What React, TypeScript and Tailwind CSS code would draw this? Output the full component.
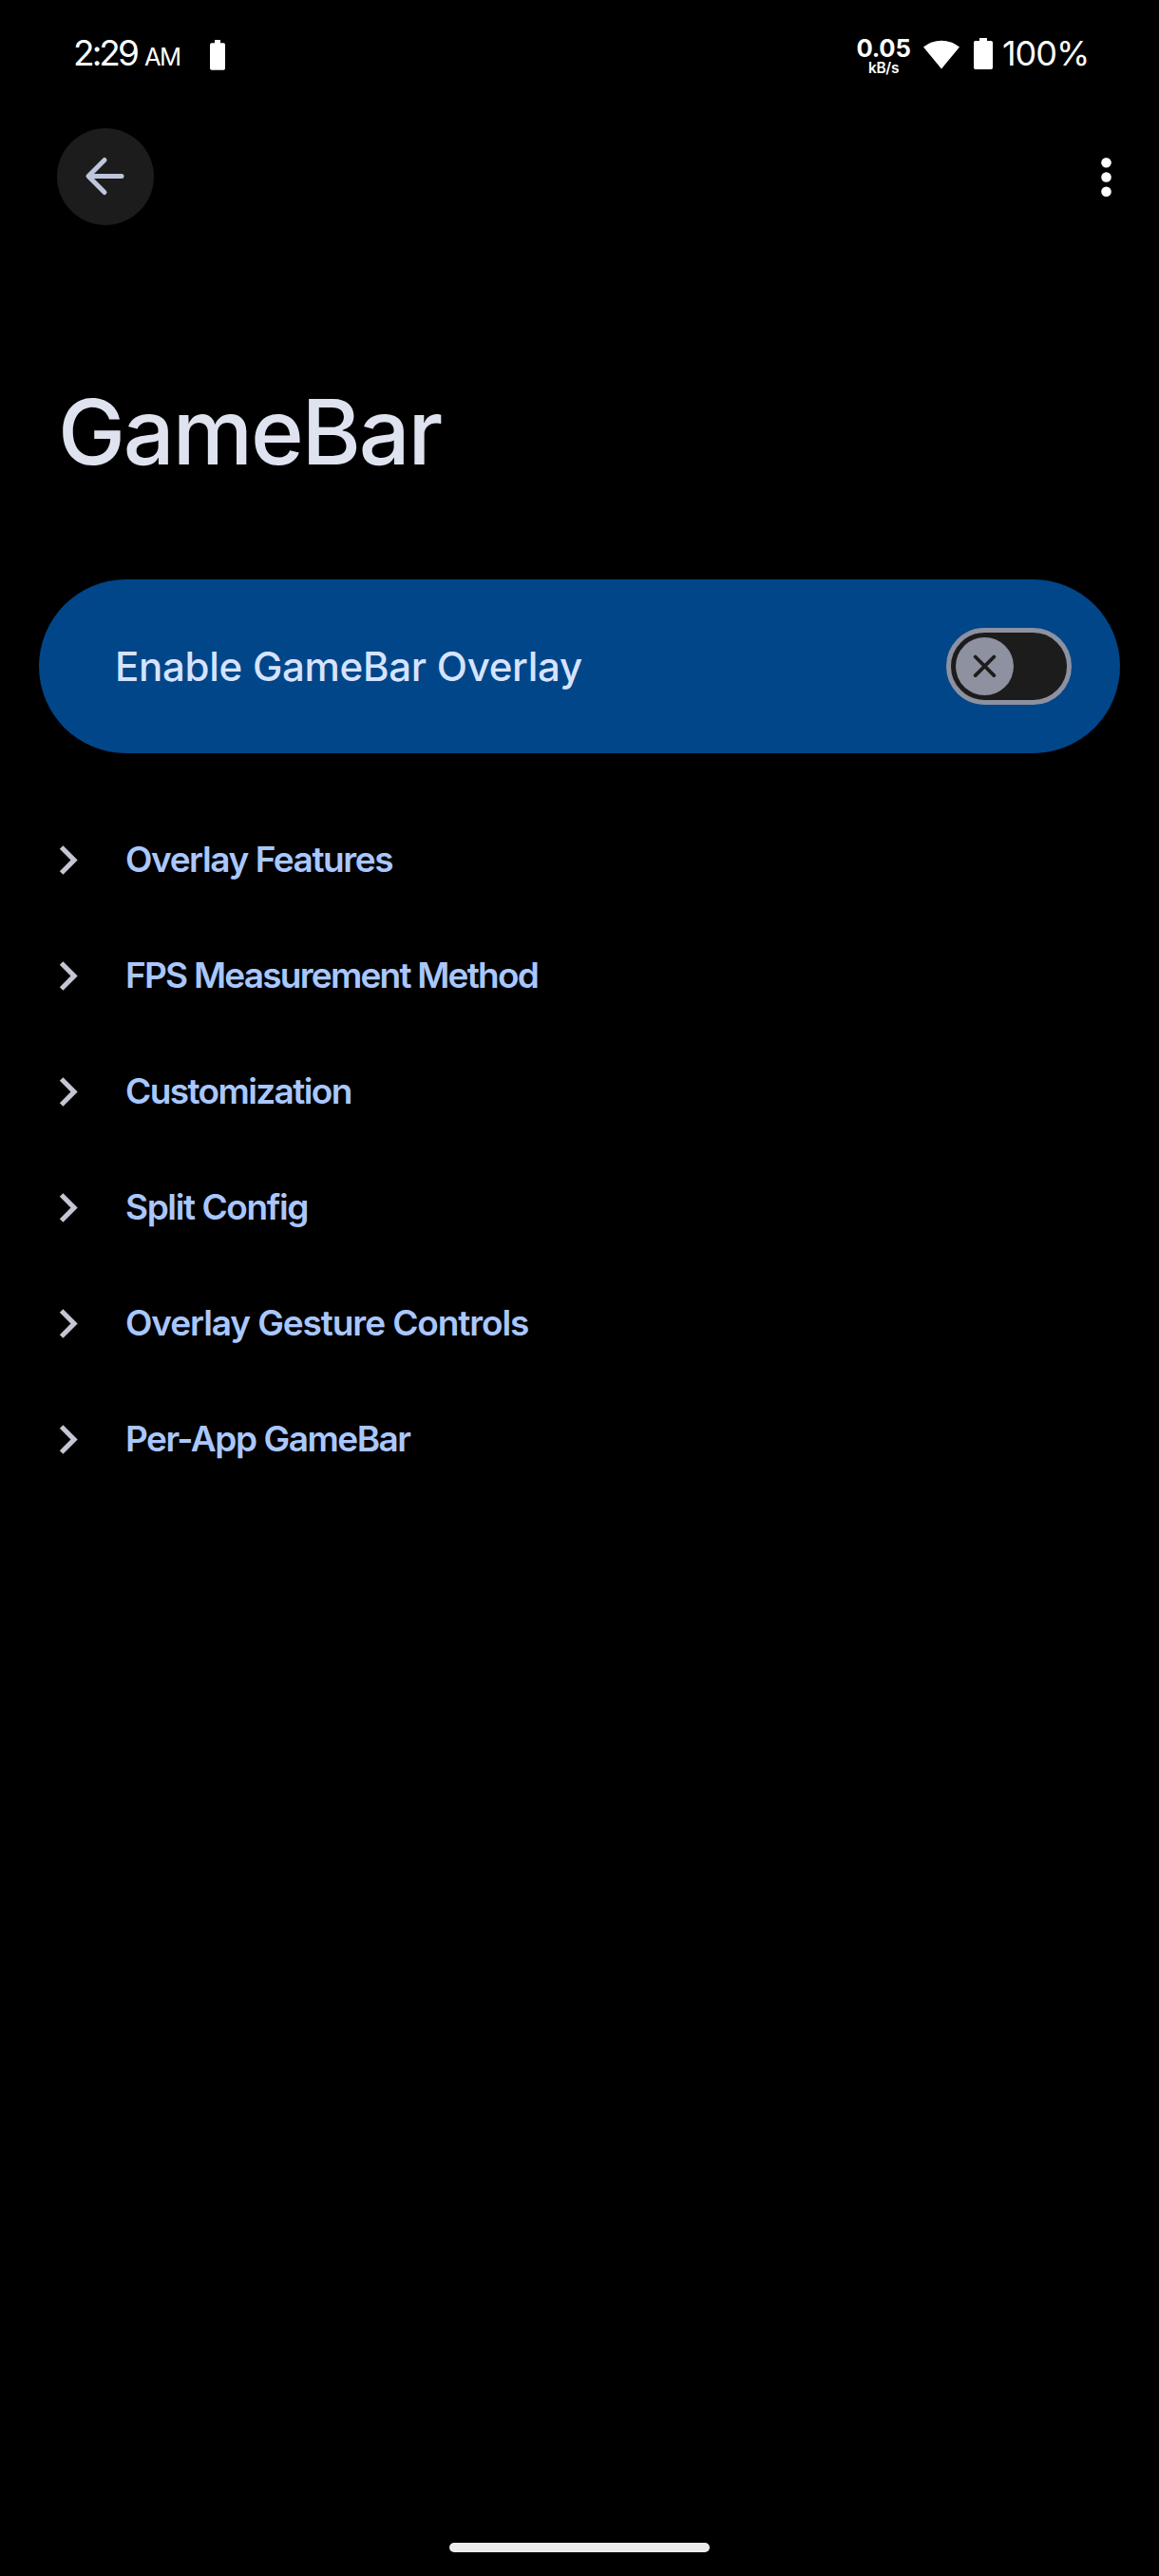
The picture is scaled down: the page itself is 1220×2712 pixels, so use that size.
const sections = [
  { title: "Overlay Features", spacing: "tracking-[-1.42px]" },
  { title: "FPS Measurement Method", spacing: "tracking-[-1.77px]" },
  { title: "Customization", spacing: "tracking-[-1.6px]" },
  { title: "Split Config", spacing: "tracking-[-1.4px]" },
  { title: "Overlay Gesture Controls", spacing: "tracking-[-1.1px]" },
  { title: "Per-App GameBar", spacing: "tracking-[-1.47px]" },
];

function StatusBar() {
  return (
    <div className="flex h-[113px] items-center justify-between pr-[74px] pl-[77px] text-white">
      <div className="flex items-center">
        <div className="flex items-baseline">
          <span className="w-[75px] text-[37px] leading-[44px] tracking-[-2.93px]">2:29</span>
          <span className="w-[68px] text-[25.5px] tracking-[-1.6px]">AM</span>
        </div>
        <svg className="mt-[3px] ml-px h-8 w-4" viewBox="0 0 16 32" fill="currentColor">
          <path d="M5 0h6v3.3h3.2A1.8 1.8 0 0 1 16 5v25a1.8 1.8 0 0 1-1.8 1.8H1.8A1.8 1.8 0 0 1 0 30V5a1.8 1.8 0 0 1 1.8-1.7H5z" />
        </svg>
      </div>
      <div className="flex items-center">
        <div className="mt-2.5 flex w-[58px] flex-col items-center">
          <span className="text-[25.7px] leading-5 font-bold tracking-[-0.24px]">0.05</span>
          <span className="text-[15.5px] leading-[22px] font-semibold tracking-[-0.3px]">kB/s</span>
        </div>
        <svg className="ml-[13px] h-8 w-[38px]" viewBox="0 0 38 32" fill="currentColor">
          <path d="M19 31.6 0 8.4A30.5 30.5 0 0 1 38 8.4z" />
        </svg>
        <svg className="ml-[15px] h-[33px] w-5" viewBox="0 0 20 33" fill="currentColor">
          <path d="M6 0h8v3h4.2A1.8 1.8 0 0 1 20 4.8V31.2A1.8 1.8 0 0 1 18.2 33H1.8A1.8 1.8 0 0 1 0 31.2V4.8A1.8 1.8 0 0 1 1.8 3H6z" />
        </svg>
        <span className="mb-0.5 ml-2.5 w-[91px] text-[36px] leading-[44px] tracking-[-1.02px]">100%</span>
      </div>
    </div>
  );
}

function Toolbar() {
  return (
    <div className="flex h-[146px] items-center justify-between pr-[50px] pl-[60px]">
      <button className="flex size-[102px] items-center justify-center rounded-full bg-[#1c1c1c] text-[#bfc6dc]">
        <svg
          className="size-[60px]"
          viewBox="0 0 60 60"
          fill="none"
          stroke="currentColor"
          strokeWidth="5"
          strokeLinecap="round"
          strokeLinejoin="round"
        >
          <path d="M47 29.5H12.5M29 12.5 12 29.5 29 46.5" />
        </svg>
      </button>
      <svg className="h-[42px] w-[11px] text-white" viewBox="0 0 11 42" fill="currentColor">
        <circle cx="5.5" cy="6.2" r="5.3" />
        <circle cx="5.5" cy="21.5" r="5.3" />
        <circle cx="5.5" cy="36.8" r="5.3" />
      </svg>
    </div>
  );
}

function Toggle() {
  return (
    <div className="flex h-[81px] w-[132px] items-center rounded-full border-[5px] border-[#8d91a0] bg-[#1c1c1c] pl-[5px]">
      <div className="flex size-[61px] items-center justify-center rounded-full bg-[#8d91a0] text-[#1c1c1c]">
        <svg
          className="size-[25px]"
          viewBox="0 0 25 25"
          fill="none"
          stroke="currentColor"
          strokeWidth="3.8"
          strokeLinecap="round"
        >
          <path d="m2.7 2.5 19.6 19.6M22.3 2.5 2.7 22.1" />
        </svg>
      </div>
    </div>
  );
}

export default function App() {
  return (
    <div className="flex min-h-screen flex-col bg-black font-['Inter',sans-serif] whitespace-nowrap">
      <StatusBar />
      <Toolbar />
      <h1 className="mt-[146px] mb-[105px] pl-[61px] text-[95px] leading-[100px] font-medium tracking-[-2.15px] text-[#dfe2ef]">
        GameBar
      </h1>
      <div className="mx-[41px] flex h-[183px] items-center justify-between rounded-full bg-[#004689] pr-[51px] pl-20">
        <span className="text-[42px] font-medium tracking-[-0.28px] text-[#d6e3ff]">Enable GameBar Overlay</span>
        <Toggle />
      </div>
      <ul className="mt-[51px]">
        {sections.map(({ title, spacing }) => (
          <li key={title} className="flex h-[122px] items-center pl-[41px]">
            <svg className="size-[61px] text-[#c4c6d3]" viewBox="0 0 24 24" fill="currentColor">
              <path d="M10 6 8.59 7.41 13.17 12l-4.58 4.59L10 18l6-6z" />
            </svg>
            <span className={`ml-[30px] text-[37px] font-semibold text-[#a9c7ff] ${spacing}`}>{title}</span>
          </li>
        ))}
      </ul>
      <div className="mx-auto mt-auto mb-[25px] h-2.5 w-[274px] rounded-full bg-[#ececec]" />
    </div>
  );
}
